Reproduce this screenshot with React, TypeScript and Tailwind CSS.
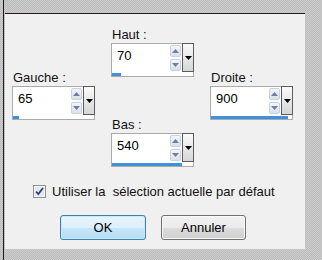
import React from 'react';

type Field = { label: string; value: string; fill: number };

const haut: Field = { label: 'Haut :', value: '70', fill: 9 };
const gauche: Field = { label: 'Gauche :', value: '65', fill: 6 };
const droite: Field = { label: 'Droite :', value: '900', fill: 77 };
const bas: Field = { label: 'Bas :', value: '540', fill: 70 };

function SpinButton({ up }: { up: boolean }) {
    return (
        <div className="w-[11px] h-[12px] rounded-[2px] border border-[#c9d2de] bg-[linear-gradient(#f3f6fa,#d9e1eb)] flex items-center justify-center">
            <svg width="7" height="4" viewBox="0 0 7 4">
                {up ? <path d="M0 4 L3.5 0 L7 4 Z" fill="#6d7fa6" /> : <path d="M0 0 L7 0 L3.5 4 Z" fill="#6d7fa6" />}
            </svg>
        </div>
    );
}

function NumberField({ field }: { field: Field }) {
    return (
        <div className="flex flex-col">
            <div className="text-[13px] leading-[15px] text-[#111] pl-px">{field.label}</div>
            <div className="mt-[1px] w-[83px] h-[34px] border border-[#aaaaaa] bg-white flex flex-col">
                <div className="flex h-[28px]">
                    <div className="flex-1 pl-[5px] pt-[4px] text-[13px] leading-[15px] text-black">{field.value}</div>
                    <div className="flex flex-col gap-[2px] pt-[1px] mr-px">
                        <SpinButton up />
                        <SpinButton up={false} />
                    </div>
                    <div className="w-[12px] h-[29px] -mt-px -mr-px border border-[#5c5c5c] bg-[linear-gradient(#fbfbfb,#d6d6d6)] flex items-center justify-center">
                        <svg width="7" height="4" viewBox="0 0 7 4">
                            <path d="M0 0 L7 0 L3.5 4 Z" fill="#000" />
                        </svg>
                    </div>
                </div>
                <div className="h-[4px] mt-[1px] bg-white">
                    <div className="h-full bg-[#4290dd]" style={{ width: field.fill }} />
                </div>
            </div>
        </div>
    );
}

export default function App() {
    return (
        <div className="w-[322px] h-[260px] flex bg-[repeating-conic-gradient(#bcbcbc_0_25%,#cdcdcd_0_50%)] bg-size-[2px_2px] font-['Liberation_Sans',Arial,sans-serif]">
            <div className="w-[3px]" />
            <div className="w-px bg-[#1b1b1b]" />
            <div className="w-px" />
            <div className="w-[300px] flex flex-col">
                <div className="h-[13px]" />
                <div className="h-[236px] border-t border-[#2a1b1b] bg-[#f0f0f0] flex flex-col">
                    <div className="flex pl-[7px] gap-x-[16px] items-start">
                        <div className="pt-[56px]">
                            <NumberField field={gauche} />
                        </div>
                        <div className="pt-[13px] flex flex-col gap-[40px]">
                            <NumberField field={haut} />
                            <NumberField field={bas} />
                        </div>
                        <div className="pt-[56px]">
                            <NumberField field={droite} />
                        </div>
                    </div>

                    <div className="mt-[17px] pl-[28px] flex items-center gap-[6px]">
                        <svg width="13" height="13" viewBox="0 0 13 13">
                            <rect x="0.5" y="0.5" width="12" height="12" fill="#f4f4f4" stroke="#8f8f8f" />
                            <rect x="2" y="2" width="9" height="9" fill="#e4e9f0" />
                            <path d="M3 6.5 L5.3 9 L10 3" fill="none" stroke="#2b3f7a" strokeWidth="1.8" />
                        </svg>
                        <span className="text-[13px] leading-[15px] text-[#111] whitespace-pre">Utiliser la  sélection actuelle par défaut</span>
                    </div>

                    <div className="mt-[16px] pl-[55px] flex gap-[15px]">
                        <button className="w-[86px] h-[25px] rounded-[3px] border border-[#3c7fb1] bg-[linear-gradient(#e8f4fc_0%,#dceffb_50%,#c8e6f8_50%,#b5dcf3_100%)] text-[13px] text-black shadow-[inset_0_0_0_1px_#cdeafd]">OK</button>
                        <button className="w-[85px] h-[25px] rounded-[3px] border border-[#707070] bg-[linear-gradient(#f2f2f2_0%,#ebebeb_50%,#dddddd_50%,#cfcfcf_100%)] text-[13px] text-black shadow-[inset_0_0_0_1px_#fafafa]">Annuler</button>
                    </div>
                </div>
            </div>
        </div>
    );
}
